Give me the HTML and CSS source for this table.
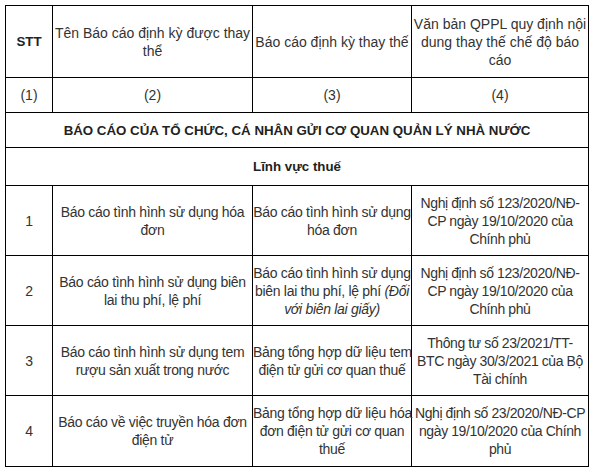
FILE: index.html
```html
<!DOCTYPE html>
<html lang="vi">
<head>
<meta charset="utf-8">
<title>Bảng báo cáo định kỳ</title>
<link rel="stylesheet" href="styles.css">
</head>
<body>
<div class="page">
<table class="report">
  <colgroup>
    <col class="c1">
    <col class="c2">
    <col class="c3">
    <col class="c4">
  </colgroup>
  <tbody>
    <tr class="r-head">
      <td><span class="b">STT</span></td>
      <td>Tên Báo cáo định kỳ được thay<br>thể</td>
      <td>Báo cáo định kỳ thay thế</td>
      <td>Văn bản QPPL quy định nội<br>dung thay thế chế độ báo<br>cáo</td>
    </tr>
    <tr class="r-num">
      <td>(1)</td>
      <td>(2)</td>
      <td>(3)</td>
      <td>(4)</td>
    </tr>
    <tr class="r-sec">
      <td colspan="4"><span class="b">BÁO CÁO CỦA TỔ CHỨC, CÁ NHÂN GỬI CƠ QUAN QUẢN LÝ NHÀ NƯỚC</span></td>
    </tr>
    <tr class="r-sub">
      <td colspan="4"><span class="b">Lĩnh vực thuế</span></td>
    </tr>
    <tr class="r-data">
      <td>1</td>
      <td>Báo cáo tình hình sử dụng hóa<br>đơn</td>
      <td>Báo cáo tình hình sử dụng<br>hóa đơn</td>
      <td class="law">Nghị định số 123/2020/NĐ-<br>CP ngày 19/10/2020 của<br>Chính phủ</td>
    </tr>
    <tr class="r-data">
      <td>2</td>
      <td>Báo cáo tình hình sử dụng biên<br>lai thu phí, lệ phí</td>
      <td>Báo cáo tình hình sử dụng<br>biên lai thu phí, lệ phí <em>(Đối<br>với biên lai giấy)</em></td>
      <td class="law">Nghị định số 123/2020/NĐ-<br>CP ngày 19/10/2020 của<br>Chính phủ</td>
    </tr>
    <tr class="r-data">
      <td>3</td>
      <td>Báo cáo tình hình sử dụng tem<br>rượu sản xuất trong nước</td>
      <td>Bảng tổng hợp dữ liệu tem<br>điện tử gửi cơ quan thuế</td>
      <td class="law">Thông tư số 23/2021/TT-<br>BTC ngày 30/3/2021 của Bộ<br>Tài chính</td>
    </tr>
    <tr class="r-data r-last">
      <td>4</td>
      <td>Báo cáo về việc truyền hóa đơn<br>điện tử</td>
      <td>Bảng tổng hợp dữ liệu hóa<br>đơn điện tử gửi cơ quan<br>thuế</td>
      <td class="law">Nghị định số 23/2020/NĐ-CP<br>ngày 19/10/2020 của Chính<br>phủ</td>
    </tr>
  </tbody>
</table>
</div>
</body>
</html>
```

FILE: styles.css
```css
html, body {
  margin: 0;
  padding: 0;
  background: #ffffff;
}

.page {
  padding: 5px 0 0 5px;
}

.report {
  border-collapse: collapse;
  table-layout: fixed;
  width: 583px;
  font-family: "Liberation Sans", Arial, sans-serif;
  font-size: 14px;
  line-height: 18px;
  color: #333333;
}

.c1 { width: 47px; }
.c2 { width: 200px; }
.c3 { width: 159px; }
.c4 { width: 177px; }

.report td {
  border: 1px solid #000000;
  padding: 0;
  text-align: center;
  vertical-align: middle;
  white-space: nowrap;
  letter-spacing: 0;
}

.report .r-data td {
  letter-spacing: -0.3px;
}

.report .r-data td.law {
  letter-spacing: -0.4px;
}

.b {
  font-family: "Liberation Sans", Arial, sans-serif;
  font-size: 13.3px;
  font-weight: bold;
  color: #222222;
}

.r-head { height: 72px; }
.r-num { height: 35px; }
.r-sec { height: 35px; }
.r-sub { height: 38px; }
.r-data { height: 70px; }
.r-last { height: 71px; }

em {
  font-style: italic;
}
```
